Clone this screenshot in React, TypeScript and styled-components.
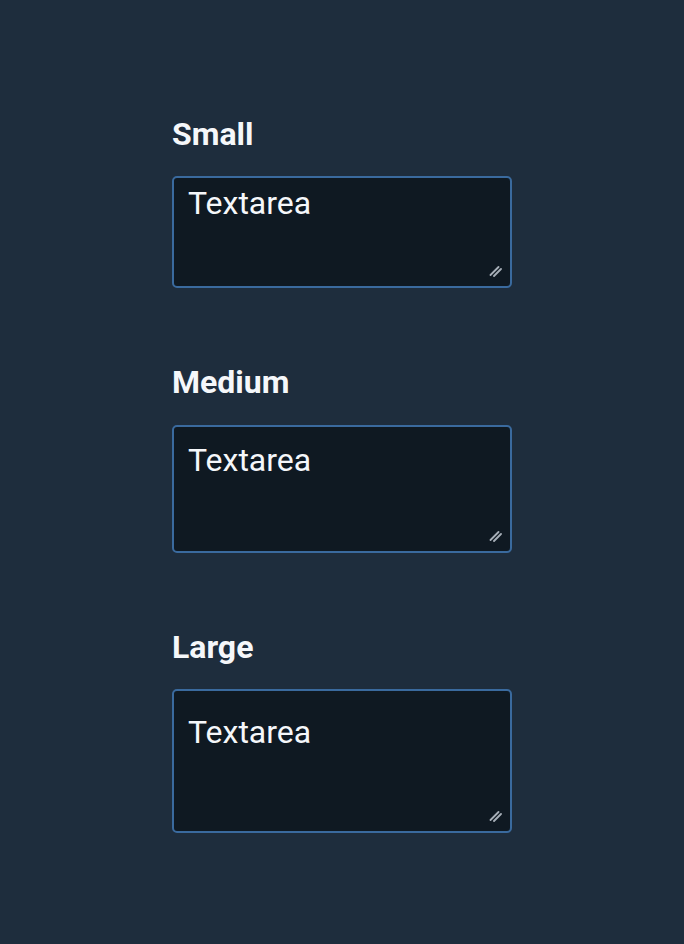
import React from "react";
import styled, { createGlobalStyle } from "styled-components";

const Global = createGlobalStyle`
  html, body { margin: 0; padding: 0; background: #1e2d3d; }
  body { font-family: Roboto, "Liberation Sans", sans-serif; }
`;

const Page = styled.main`
  min-height: 944px;
  box-sizing: border-box;
  background: #1e2d3d;
  display: flex;
  justify-content: center;
  padding-top: 115px;
`;

const Column = styled.div`
  width: 340px;
  display: flex;
  flex-direction: column;
  gap: 75px;
`;

const Field = styled.label`
  display: flex;
  flex-direction: column;
  gap: 23px;
`;

const Label = styled.span`
  font-family: Roboto, "Liberation Sans", sans-serif;
  font-weight: 700;
  font-size: 32px;
  line-height: 1.2;
  color: #f5f7fa;
`;

type Size = "small" | "medium" | "large";

const heights: Record<Size, number> = { small: 112, medium: 128, large: 144 };
const pads: Record<Size, number> = { small: 6, medium: 14, large: 22 };

const AreaWrap = styled.div`
  position: relative;
  width: 340px;
  display: flex;
`;

const Area = styled.textarea<{ $size: Size }>`
  box-sizing: border-box;
  width: 340px;
  height: ${(p) => heights[p.$size]}px;
  padding: ${(p) => pads[p.$size]}px 15px 0 14px;
  margin: 0;
  background: #0f1922;
  border: 2px solid #3a6a9e;
  border-radius: 5px;
  color: #f5f7fa;
  font-family: Roboto, "Liberation Sans", sans-serif;
  font-size: 32px;
  line-height: 1.2;
  resize: none;
  outline: none;
`;

const Grip = styled.svg`
  position: absolute;
  right: 10px;
  bottom: 11px;
  width: 13px;
  height: 13px;
  pointer-events: none;
`;

const ResizeGrip = () => (
  <Grip viewBox="0 0 13 13" aria-hidden="true">
    <path d="M1.5 11 L9.5 3 M5 12 L12 5" stroke="#a7afb8" strokeWidth="1.8" strokeLinecap="round" fill="none" />
  </Grip>
);

const sizes: { size: Size; label: string }[] = [
  { size: "small", label: "Small" },
  { size: "medium", label: "Medium" },
  { size: "large", label: "Large" },
];

export default function App() {
  return (
    <>
      <Global />
      <Page>
        <Column>
          {sizes.map((s) => (
            <Field key={s.size}>
              <Label>{s.label}</Label>
              <AreaWrap>
                <Area $size={s.size} defaultValue="Textarea" />
                <ResizeGrip />
              </AreaWrap>
            </Field>
          ))}
        </Column>
      </Page>
    </>
  );
}
